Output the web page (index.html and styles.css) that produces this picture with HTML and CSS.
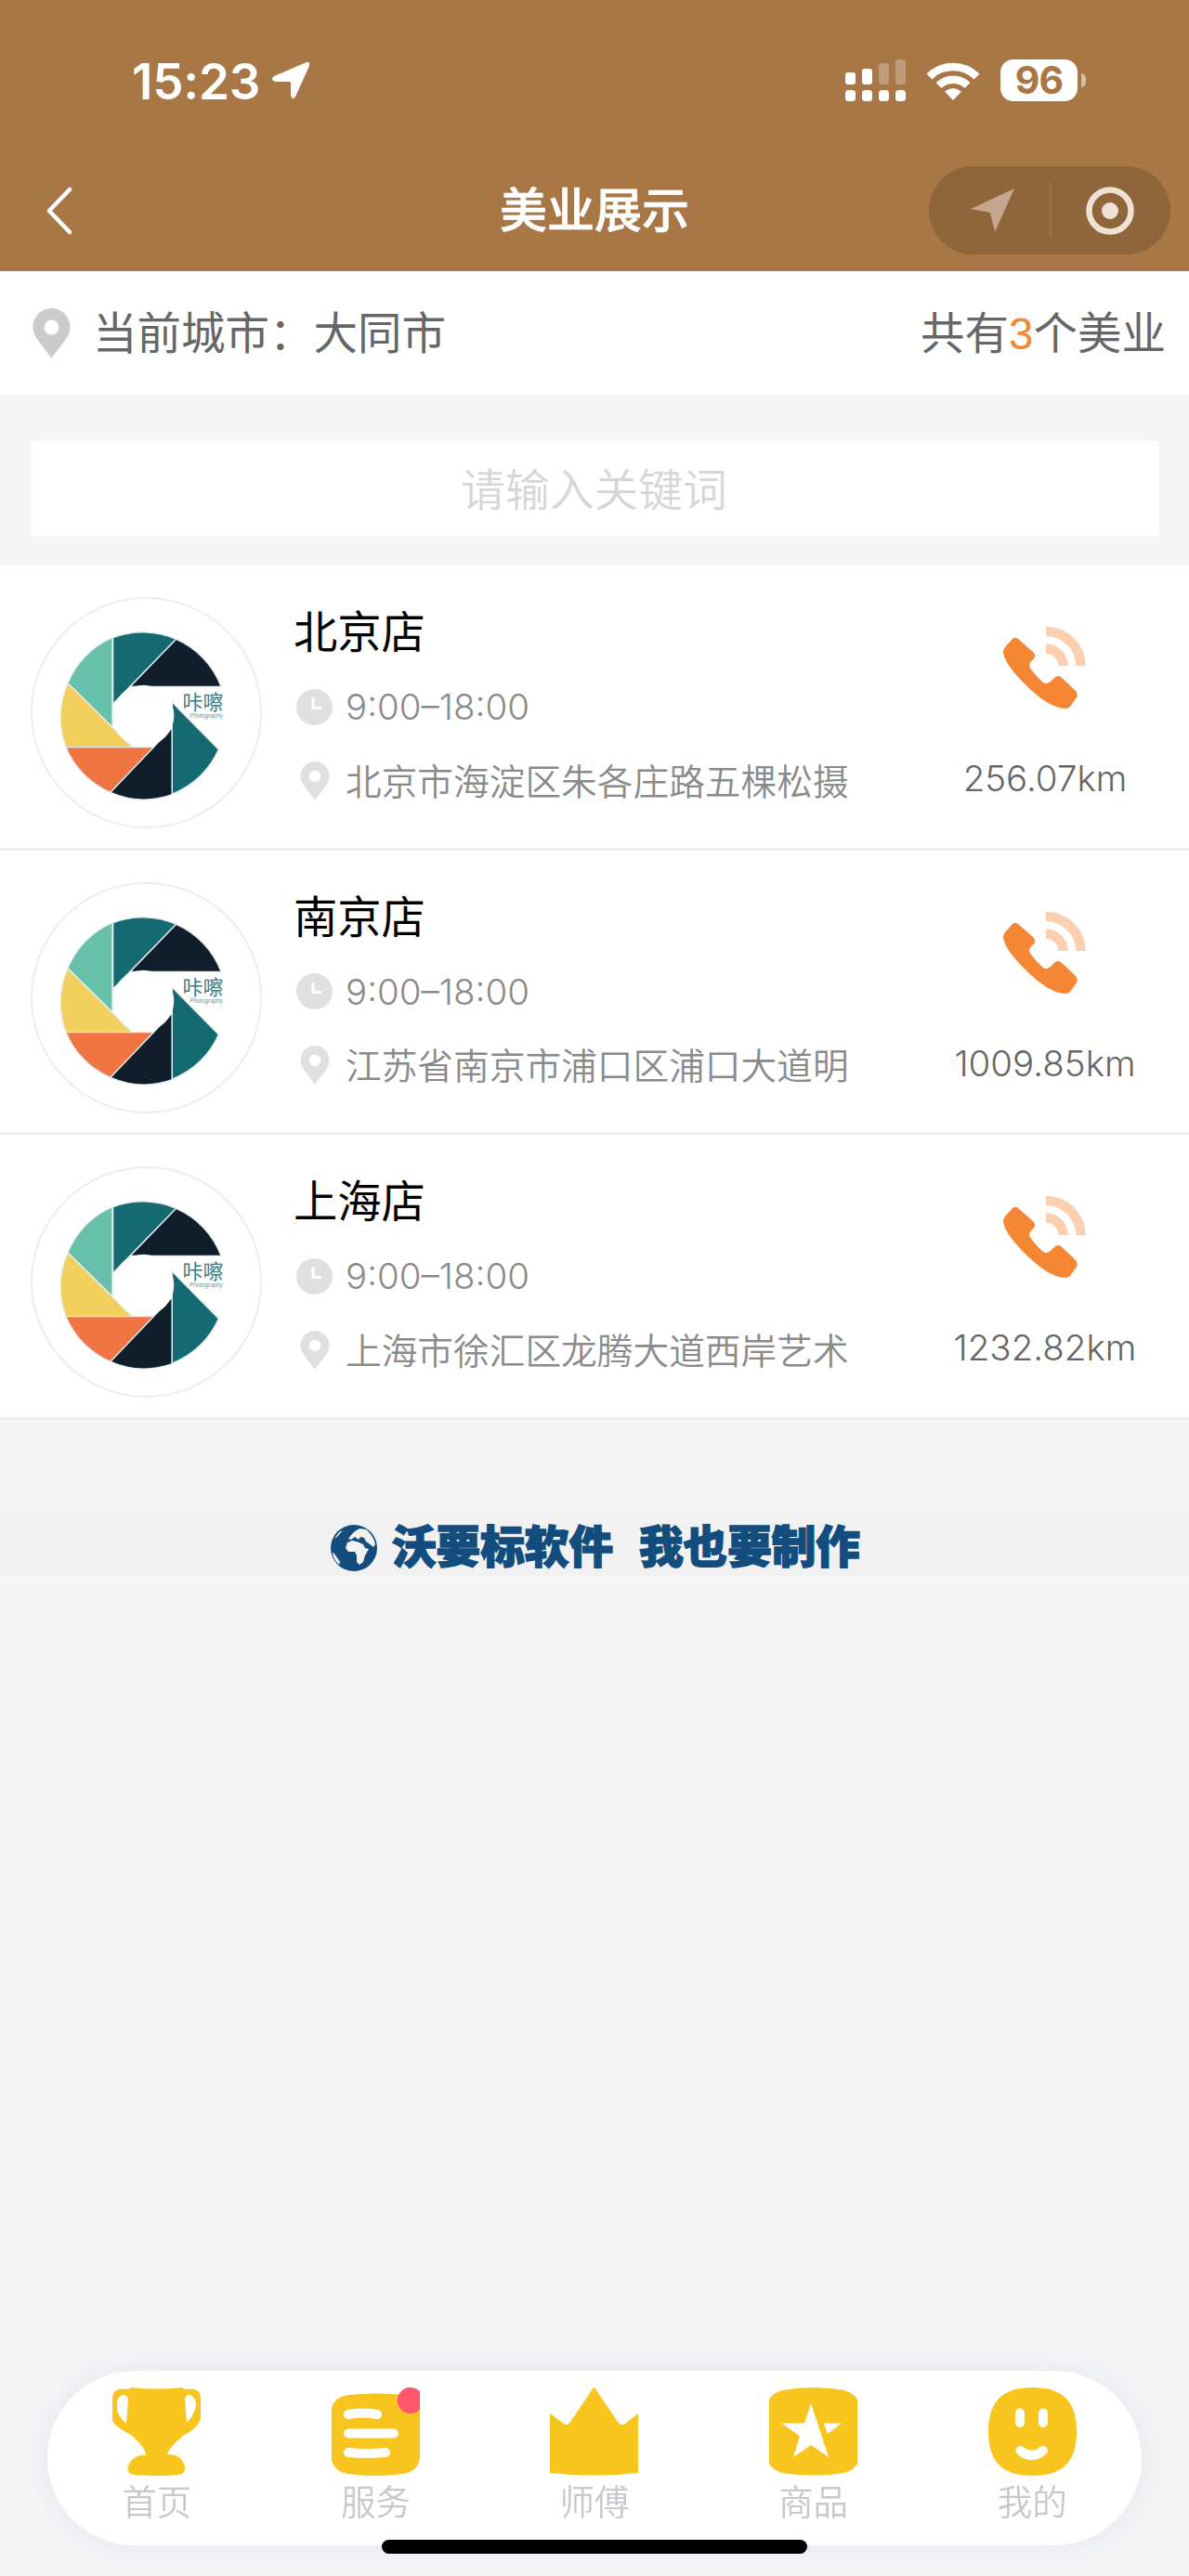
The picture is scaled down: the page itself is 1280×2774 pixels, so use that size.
FILE: index.html
```html
<!doctype html>
<html lang="zh-CN" dir="ltr">
<head>
  <meta charset="utf-8" />
  <title>美业展示</title>
  <link rel="stylesheet" href="styles.css">
</head>
<body>

<!-- Icons that are used more than once -->
<svg class="sprite" aria-hidden="true">
  <symbol id="pin" viewBox="0 0 40 54">
    <path fill-rule="evenodd" d="M20 0C9 0 0 9 0 20.500C0 31 10 39 20 54C30 39 40 31 40 20.500C40 9 31 0 20 0ZM20 12.500a8 8 0 1 1 0 16a8 8 0 1 1 0-16Z" />
  </symbol>
  <symbol id="clock" viewBox="0 0 39 39">
    <circle cx="19.500" cy="19.500" r="19.500" />
    <path d="M18 9.500V20.500H27" fill="none" stroke="#fff" stroke-width="3" />
  </symbol>
  <symbol id="phone" viewBox="0 0 90 90">
    <path fill="#f58634" d="M10 14Q13 11.500 16 14L32 28Q36 32 33 35.500Q25 41 30 47Q36 55 43 61Q47 64 52 59Q58 52 62 55L77 69Q81 73 79 77L72 87Q70 89 67 89C55 89 41 79 31 70C17 57 1 40 0 28Q0 25 2 23Z" />
    <path fill="none" stroke="#fbd0b0" stroke-width="10.500" d="M46 6A37.500 37.500 0 0 1 83.500 43M46 24.500A18.500 18.500 0 0 1 64.500 43" />
  </symbol>
  <symbol id="logo" viewBox="0 0 747 747">
    <circle cx="373.500" cy="373.500" r="370.500" fill="#fff" stroke="#ededef" stroke-width="6" />
    <g transform="translate(-40 -40)">
      <g stroke="#e4edec" stroke-width="4">
        <path fill="#67c0a9" d="M304 171A271 271 0 0 0 160 318L304 460Z" />
        <path fill="#146a70" d="M306 171A271 271 0 0 1 510 176L306 385Z" />
        <path fill="#101d2a" d="M510 176A271 271 0 0 1 655 329H362Z" />
        <path fill="#f3cf5d" d="M160 318L368 525H154A271 271 0 0 1 160 318Z" />
        <path fill="#f07543" d="M154 525H440L298 671A271 271 0 0 1 154 525Z" />
        <path fill="#101d2a" d="M298 671L497 462V678A271 271 0 0 1 298 671Z" />
        <path fill="#146a70" d="M497 380L647 532A271 271 0 0 1 497 676Z" />
      </g>
      <circle cx="404" cy="423" r="99" fill="#fff" />
    </g>
  </symbol>
</svg>

<header>
  <div class="status">
    <span class="time">15:23</span>
    <svg class="locate" viewBox="0 0 42 42"><path d="M38 1Q42 0 41 5L26 38Q23 43 21 37V23Q21 22 19 22H5Q-2 20 3 16Z" fill="#fff" /></svg>
    <span class="signals">
      <svg width="65" height="45" viewBox="0 0 65 45" fill="#fff">
        <rect y="14" width="11" height="13" rx="3" />
        <rect x="18" y="10" width="11" height="17" rx="3" />
        <g opacity=".27"><rect x="36" y="4" width="11" height="23" rx="3" /><rect x="54" width="11" height="27" rx="3" /></g>
        <rect y="33" width="11" height="12" rx="3.500" />
        <rect x="18" y="33" width="11" height="12" rx="3.500" />
        <rect x="36" y="33" width="11" height="12" rx="3.500" />
        <rect x="54" y="33" width="11" height="12" rx="3.500" />
      </svg>
      <svg width="58" height="42" viewBox="0 0 58 42">
        <path d="M3.500 16.500A36 36 0 0 1 54.500 16.500M13.500 26A22.500 22.500 0 0 1 44.500 26" fill="none" stroke="#fff" stroke-width="8.500" />
        <path d="M29 42L20 32.500Q29 25.500 38 32.500Z" fill="#fff" />
      </svg>
      <span class="battery">96</span>
      <span class="battery-nub"></span>
    </span>
  </div>
  <div class="navbar">
    <svg class="back" viewBox="0 0 28 52"><path d="M25 3L3 26L25 49" fill="none" stroke="#fff" stroke-width="4.500" stroke-linecap="round" stroke-linejoin="round" /></svg>
    <h1>美业展示</h1>
    <div class="capsule">
      <svg width="48" height="48" viewBox="0 0 48 48"><path d="M47 0L26 47L21 26L0 22Z" fill="#c3a68d" /></svg>
      <svg class="target" width="52" height="52" viewBox="0 0 52 52"><circle cx="26" cy="26" r="22.500" fill="none" stroke="#f0e1d6" stroke-width="6.500" /><circle cx="26" cy="26" r="9" fill="#f0e1d6" /></svg>
    </div>
  </div>
</header>

<main>
  <div class="city">
    <svg><use href="#pin" /></svg>
    <span>当前城市：大同市</span>
    <span class="total">共有<em>3</em>个美业</span>
  </div>

  <div class="search">
    <input type="text" placeholder="请输入关键词" />
  </div>

  <ul class="shops">
    <li>
      <svg class="avatar" viewBox="0 0 249 249">
        <use href="#logo" />
        <text class="logo-name" x="163.500" y="121">咔嚓</text>
        <text class="logo-sub" x="171" y="130" textLength="36">Photography</text>
      </svg>
      <div class="info">
        <h2>北京店</h2>
        <p><svg class="clock"><use href="#clock" /></svg><span class="hours">9:00–18:00</span></p>
        <p><svg class="pin"><use href="#pin" /></svg>北京市海淀区朱各庄路五棵松摄</p>
      </div>
      <div class="contact">
        <svg><use href="#phone" /></svg>
        <span>256.07km</span>
      </div>
    </li>
    <li>
      <svg class="avatar" viewBox="0 0 249 249">
        <use href="#logo" />
        <text class="logo-name" x="163.500" y="121">咔嚓</text>
        <text class="logo-sub" x="171" y="130" textLength="36">Photography</text>
      </svg>
      <div class="info">
        <h2>南京店</h2>
        <p><svg class="clock"><use href="#clock" /></svg><span class="hours">9:00–18:00</span></p>
        <p><svg class="pin"><use href="#pin" /></svg>江苏省南京市浦口区浦口大道明</p>
      </div>
      <div class="contact">
        <svg><use href="#phone" /></svg>
        <span>1009.85km</span>
      </div>
    </li>
    <li>
      <svg class="avatar" viewBox="0 0 249 249">
        <use href="#logo" />
        <text class="logo-name" x="163.500" y="121">咔嚓</text>
        <text class="logo-sub" x="171" y="130" textLength="36">Photography</text>
      </svg>
      <div class="info">
        <h2>上海店</h2>
        <p><svg class="clock"><use href="#clock" /></svg><span class="hours">9:00–18:00</span></p>
        <p><svg class="pin"><use href="#pin" /></svg>上海市徐汇区龙腾大道西岸艺术</p>
      </div>
      <div class="contact">
        <svg><use href="#phone" /></svg>
        <span>1232.82km</span>
      </div>
    </li>
  </ul>

  <div class="copyright">
    <svg viewBox="0 0 50 50">
      <circle cx="25" cy="25" r="25" fill="#124d7e" />
      <path fill="#f1f1f1" d="M18 19L23 17L28 18L35 21L37 25L41 26L37 33L35 40L31 43L28 40V33L26 29H19L16 25ZM22 11L26 7L31 4L38 5Q46 11 48 21L46 24L41 20L38 18L36 14L32 13L30 16L26 13L22 16L19 15ZM3 30L6 34L10 40L9 43Q3 38 2 30ZM4 15L9 8L13 6L7 13Z" />
    </svg>
    <span>沃要标软件</span>
    <span>我也要制作</span>
  </div>
</main>

<nav>
  <a>
    <svg viewBox="0 0 95 95">
      <path fill-rule="evenodd" d="M20 0Q48 3 75 0L78 2Q95-1 95 11V34Q93 43 76 52Q60 66 59 72Q72 71 77 82Q81 94 70 94Q48 96 24 94Q13 93 18 82Q23 72 36 73Q36 65 20 51Q2 42 0 35V11Q0-1 17 2ZM17 13Q15 6 9 9Q4 13 5 21Q5 30 15 39ZM78 13L80 38Q88 30 90 20Q90 11 84 8Q79 7 78 13Z" />
    </svg>
    首页
  </a>
  <a>
    <svg viewBox="0 0 95 95">
      <path d="M0 21Q5 9 19 8Q48 5 78 8Q95 11 95 25V76Q93 90 78 93Q48 97 17 93Q4 91 0 79Z" />
      <path d="M18 29Q33 26 49 29M18 49.500H67M18 70Q38 72 58 70" fill="none" stroke="#fff" stroke-width="10" stroke-linecap="round" />
      <path d="M95 4.500A14 14 0 1 0 95 23.500Z" fill="#ff566c" />
    </svg>
    服务
  </a>
  <a>
    <svg viewBox="0 0 95 95"><path d="M0 28L15 39Q19 42 22 37L47 0H48L73 37Q77 42 81 39L95 28V92Q48 97 0 92Z" /></svg>
    师傅
  </a>
  <a>
    <svg viewBox="0 0 95 95">
      <path d="M0 13Q4 6 14 3Q48-3 81 3Q91 6 95 13V82Q91 89 81 92Q48 97 14 92Q4 89 0 82Z" />
      <path fill="#fff" d="M45 17L64 75L45 62L26 75L33 52.500L13.500 38.500H38ZM59 38.500H78L63 50Z" />
    </svg>
    商品
  </a>
  <a>
    <svg viewBox="0 0 95 95">
      <path d="M47.500 0C80 0 95 15 95 47.500C95 80 80 95 47.500 95C15 95 0 80 0 47.500C0 15 15 0 47.500 0Z" />
      <path d="M34 27.500V38M59 27.500V38M34.500 68Q47 78 59 68" fill="none" stroke="#fff" stroke-width="10" stroke-linecap="round" />
    </svg>
    我的
  </a>
</nav>
<div class="home-indicator"></div>

</body>
</html>
```

FILE: styles.css
```css
* {
  box-sizing: border-box;
}
body {
  margin: 0;
  min-height: 2774px;
  background-color: #f5f5f6;
  font-family: "Liberation Sans", "Noto Sans CJK SC", sans-serif;
  color: #666;
}
svg {
  display: block;
  flex: none;
}
h1,
h2,
p,
ul {
  margin: 0;
  padding: 0;
  font-weight: normal;
}
.sprite {
  position: absolute;
  width: 0;
  height: 0;
}
header {
  height: 292px;
  background-color: #a97645;
  color: #fff;
}
.status {
  display: flex;
  align-items: center;
  height: 173px;
  padding: 0 111px 0 142px;
}
.time {
  width: 150px;
  padding-top: 2px;
  font: 600 53px/60px Inter, sans-serif;
  letter-spacing: -0.200px;
}
.locate {
  width: 42px;
  height: 42px;
}
.signals {
  display: flex;
  align-items: center;
  margin-left: auto;
}
.signals svg + svg {
  margin-left: 22px;
}
.battery {
  width: 83px;
  height: 45px;
  margin-left: 22px;
  border-radius: 14px;
  background-color: #fff;
  color: #a97645;
  font: 700 41px/45px Inter, sans-serif;
  letter-spacing: -1px;
  text-align: center;
}
.battery-nub {
  width: 5px;
  height: 15px;
  margin-left: 4px;
  border-radius: 0 5px 5px 0;
  background-color: #d6bda6;
}
.navbar {
  display: grid;
  grid-template-columns: 260px 1fr 260px;
  align-items: center;
  height: 107px;
  padding: 0 20px;
}
.back {
  width: 28px;
  height: 52px;
  margin-left: 30px;
}
h1 {
  padding-top: 3px;
  font-size: 51px;
  font-weight: 500;
  line-height: 60px;
  text-align: center;
  -webkit-text-stroke: 0.700px #fff;
}
.capsule {
  display: flex;
  align-items: center;
  justify-content: space-between;
  height: 95px;
  padding: 0 39px 0 45px;
  border-radius: 48px;
  background: linear-gradient(#9d7350, #9d7350) 130px center / 2px 60px no-repeat #8f653a;
}
.city {
  display: flex;
  align-items: center;
  height: 133px;
  padding: 0 25px 0 35px;
  background-color: #fff;
  font-size: 47.500px;
}
.city svg {
  width: 41px;
  height: 54px;
  margin-right: 24px;
  fill: #cbcbcb;
}
.city span {
  padding-bottom: 6px;
}
.total {
  margin-left: auto;
}
.total em {
  color: #f58634;
  font-style: normal;
}
.search {
  height: 184px;
  padding: 50px 33px 0;
  background-color: #f5f5f5;
}
.search input {
  display: block;
  width: 100%;
  height: 102px;
  padding: 0 1px 4px 0;
  border: 0;
  background-color: #fff;
  font: 350 47.800px "Noto Sans CJK SC", sans-serif;
  text-align: center;
}
.search input::placeholder {
  color: #d6d6d6;
}
.shops {
  list-style: none;
}
.shops li {
  display: flex;
  height: 306.700px;
  padding: 34px 33px 0;
  border-bottom: 3px solid #ededed;
  background-color: #fff;
}
.avatar {
  width: 249px;
  height: 249px;
}
.logo-name {
  fill: #3b7c82;
  font: 22px "Noto Sans CJK SC", sans-serif;
}
.logo-sub {
  fill: #69999d;
  font: italic 6.500px "Liberation Sans", sans-serif;
}
.info {
  flex: 1;
  padding-left: 34px;
}
h2 {
  height: 78px;
  color: #000;
  font-size: 47.300px;
  line-height: 77px;
}
.info p {
  display: flex;
  align-items: center;
  height: 80px;
  color: #8a8a8a;
  font-size: 38.700px;
  font-weight: 350;
}
.info p + p {
  height: 75px;
}
.info p svg {
  fill: #e0e0e0;
}
.clock {
  width: 39px;
  height: 39px;
  margin: 0 14px 0 3px;
}
.pin {
  width: 32px;
  height: 42px;
  margin: 4px 17px 0 7px;
}
.hours,
.contact span {
  font-family: Inter, sans-serif;
  font-size: 38.500px;
  font-weight: 300;
  letter-spacing: 0;
}
.contact {
  display: flex;
  flex-direction: column;
  align-items: center;
  width: 244px;
  padding-top: 31px;
}
.contact svg {
  width: 90px;
  height: 90px;
}
.contact span {
  margin-top: 49px;
  line-height: 50px;
}
.copyright {
  display: flex;
  align-items: center;
  height: 69px;
  margin-top: 99px;
  padding-left: 356px;
  background-color: #f1f1f1;
  color: #124d7e;
  font-size: 47.600px;
  font-weight: 900;
  -webkit-text-stroke: 1.500px #124d7e;
}
.copyright svg {
  width: 50px;
  height: 50px;
  margin-top: 9px;
}
.copyright span {
  margin-left: 16px;
}
.copyright span + span {
  margin-left: 28px;
}
nav {
  position: fixed;
  top: 2553px;
  left: 51px;
  display: flex;
  width: 1178px;
  height: 188px;
  padding-top: 18px;
  border-radius: 94px;
  background-color: #fff;
  box-shadow: 0 0 40px rgba(200, 210, 225, 0.4);
}
nav a {
  flex: 1;
  color: #c8c8cc;
  font-size: 37.500px;
  font-weight: 350;
  line-height: 58px;
  text-align: center;
}
nav svg {
  width: 95px;
  height: 95px;
  margin: 0 auto;
  fill: #f7c51e;
}
.home-indicator {
  position: fixed;
  top: 2735px;
  left: 411px;
  width: 458px;
  height: 15px;
  border-radius: 8px;
  background-color: #000;
}
```
